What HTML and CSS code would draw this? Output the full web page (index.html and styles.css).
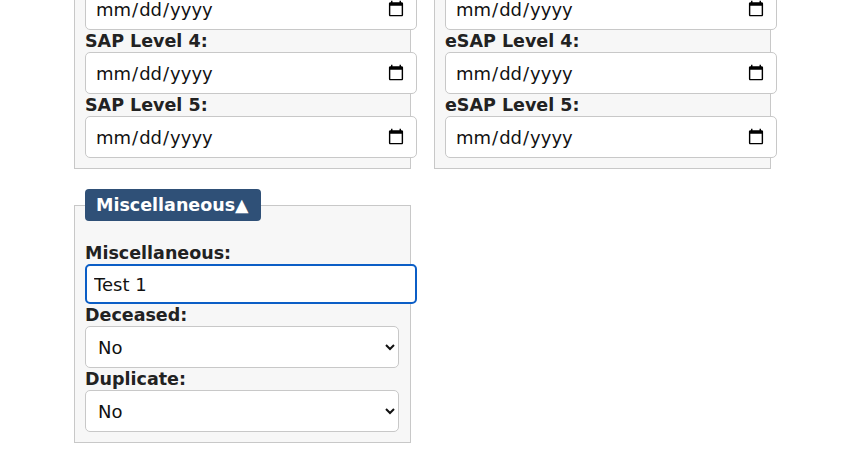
FILE: index.html
```html
<!DOCTYPE html>
<html lang="en">
<head>
<meta charset="utf-8">
<title>Form</title>
<link rel="stylesheet" href="styles.css">
</head>
<body>
<div class="page">
  <div class="row">
    <fieldset class="group">
      <label class="lbl">SAP Level 3:</label>
      <input class="field" type="date">
      <label class="lbl">SAP Level 4:</label>
      <input class="field" type="date">
      <label class="lbl">SAP Level 5:</label>
      <input class="field" type="date">
    </fieldset>
    <fieldset class="group">
      <label class="lbl">eSAP Level 3:</label>
      <input class="field" type="date">
      <label class="lbl">eSAP Level 4:</label>
      <input class="field" type="date">
      <label class="lbl">eSAP Level 5:</label>
      <input class="field" type="date">
    </fieldset>
  </div>
  <fieldset class="group misc">
    <legend class="legend"><button class="toggle" type="button">Miscellaneous▲</button></legend>
    <div class="misc-body">
      <label class="lbl">Miscellaneous:</label>
      <input class="field text focused" type="text" value="Test 1">
      <label class="lbl">Deceased:</label>
      <select class="pick"><option>No</option><option>Yes</option></select>
      <label class="lbl">Duplicate:</label>
      <select class="pick"><option>No</option><option>Yes</option></select>
    </div>
  </fieldset>
</div>
</body>
</html>
```
FILE: styles.css
```css
html, body {
  margin: 0;
  padding: 0;
  background: #ffffff;
}
body {
  font-family: "DejaVu Sans", Verdana, sans-serif;
  color: #222222;
}
.page {
  padding-left: 74px;
  margin-top: -35px;
}
.row {
  display: flex;
  gap: 23px;
  align-items: flex-start;
}
.group {
  box-sizing: border-box;
  width: 337px;
  margin: 0;
  padding: 0 10px 10px 10px;
  border: 1px solid #c8c8c8;
  background: #f7f7f7;
  min-width: 0;
}
.lbl {
  display: block;
  font-weight: bold;
  font-size: 17.5px;
  line-height: 22px;
  height: 22px;
  color: #222222;
}
.field {
  display: block;
  box-sizing: border-box;
  width: 332px;
  height: 42px;
  margin: 0;
  padding: 0 9px;
  border: 1px solid #c8c8c8;
  border-radius: 5px;
  background: #ffffff;
  font-family: "DejaVu Sans", Verdana, sans-serif;
  font-size: 18px;
  color: #111111;
}
.field.text {
  height: 40px;
}
.field.focused {
  border: 2px solid #0b5ec6;
  padding: 0 7px;
  outline: none;
}
.misc {
  margin-top: 20px;
}
.legend {
  padding: 0;
}
.toggle {
  display: block;
  height: 32px;
  padding: 0 12px 0 11px;
  margin: 0;
  border: none;
  border-radius: 4px;
  background: #2f5077;
  color: #ffffff;
  font-family: "DejaVu Sans", Verdana, sans-serif;
  font-weight: bold;
  font-size: 17.5px;
}
.misc-body {
  padding-top: 21px;
}
.pick {
  display: block;
  box-sizing: border-box;
  width: 314px;
  height: 42px;
  margin: 0;
  padding: 0 8px;
  border: 1px solid #c8c8c8;
  border-radius: 5px;
  background-color: #ffffff;
  font-family: "DejaVu Sans", Verdana, sans-serif;
  font-size: 18px;
  color: #111111;
}
```
